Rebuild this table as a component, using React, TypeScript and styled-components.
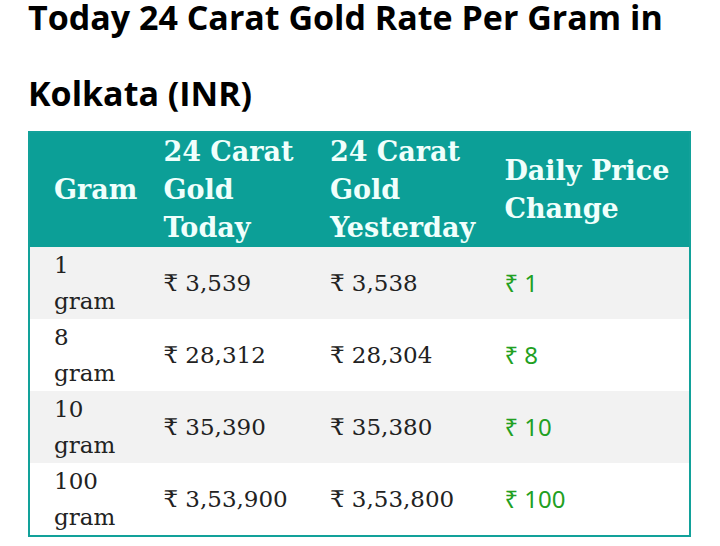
import React from 'react';
import styled, { createGlobalStyle } from 'styled-components';

interface RateRow {
  gram: string;
  today: string;
  yesterday: string;
  change: string;
}

const rows: RateRow[] = [
  { gram: '1', today: '3,539', yesterday: '3,538', change: '1' },
  { gram: '8', today: '28,312', yesterday: '28,304', change: '8' },
  { gram: '10', today: '35,390', yesterday: '35,380', change: '10' },
  { gram: '100', today: '3,53,900', yesterday: '3,53,800', change: '100' },
];

const GlobalStyle = createGlobalStyle`
  html, body {
    margin: 0;
    padding: 0;
    background: #ffffff;
  }
`;

const App: React.FC = () => {
  return (
    <Page>
      <GlobalStyle />
      <Title>Today 24 Carat Gold Rate Per Gram in Kolkata (INR)</Title>
      <RateTable>
        <colgroup>
          <col style={{ width: 126 }} />
          <col style={{ width: 166 }} />
          <col style={{ width: 174 }} />
          <col style={{ width: 193 }} />
        </colgroup>
        <thead>
          <tr>
            <HeadCell>Gram</HeadCell>
            <HeadCell>24 Carat Gold Today</HeadCell>
            <HeadCell>24 Carat Gold Yesterday</HeadCell>
            <HeadCell>Daily Price Change</HeadCell>
          </tr>
        </thead>
        <tbody>
          {rows.map((row, i) => (
            <BodyRow key={row.gram} striped={i % 2 === 0}>
              <Cell>
                {row.gram}
                <br />
                gram
              </Cell>
              <Cell>₹ {row.today}</Cell>
              <Cell>₹ {row.yesterday}</Cell>
              <Cell>
                <Change>₹ {row.change}</Change>
              </Cell>
            </BodyRow>
          ))}
        </tbody>
      </RateTable>
    </Page>
  );
};
export default App;

const Page = styled.main`
  display: flow-root;
  width: 720px;
  min-height: 546px;
  padding: 0 28px;
  box-sizing: border-box;
`;

const Title = styled.h2`
  margin: -21px 0 0 0;
  font-family: 'Open Sans', 'Noto Sans', sans-serif;
  font-weight: 700;
  font-size: 34px;
  line-height: 76px;
  color: #000000;
`;

const RateTable = styled.table`
  width: 663px;
  border-collapse: collapse;
  table-layout: fixed;
  border: 2px solid #12a19a;
  font-family: 'DejaVu Serif', 'Liberation Serif', serif;
`;

const HeadCell = styled.th`
  background: #0c9f97;
  color: #f0fffc;
  font-size: 27px;
  font-weight: 700;
  line-height: 38px;
  text-align: left;
  vertical-align: middle;
  padding: 0 8px;

  &:first-child {
    padding-left: 24px;
  }
`;

const BodyRow = styled.tr<{ striped: boolean }>`
  background: ${(p) => (p.striped ? '#f2f2f2' : '#ffffff')};
`;

const Cell = styled.td`
  color: #222222;
  font-size: 23px;
  line-height: 36px;
  vertical-align: middle;
  padding: 0 8px;

  &:first-child {
    padding-left: 24px;
  }
`;

const Change = styled.span`
  font-family: 'Noto Sans', 'Open Sans', sans-serif;
  font-size: 24px;
  color: #22a022;
`;
